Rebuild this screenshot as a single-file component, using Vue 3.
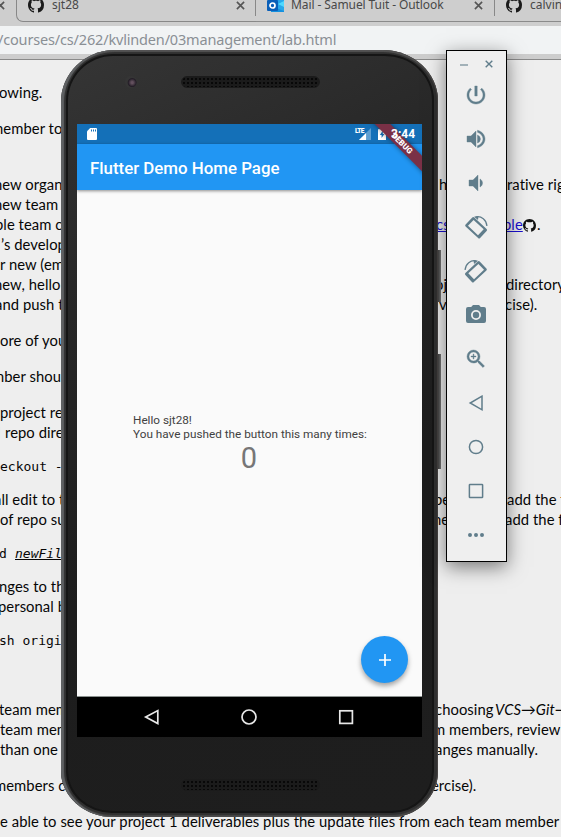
<script setup>
// Each row holds the page fragments that stay visible around the windows: [x, text, kind]
const blocks = [
  { gap: 22, rows: [[[-1, 'owing.']]] },
  { gap: 16, rows: [[[-5, 'nember to']]] },
  {
    gap: 36,
    rows: [
      [[-6, 'new organi'], [439, 'h'], [507, 'rative rights']],
      [[-6, 'new team a']],
      [[-5, 'ble team c'], [436, 'cs', 'link'], [503, 'ble', 'link'], [523, '', 'octo'], [537, '.']],
      [[1, '’s develope']],
      [[0, 'r new (emp']],
      [[-6, 'new, hello-w'], [435, 'oj'], [506, 'directory']],
      [[-5, 'and push th'], [439, 'v'], [505, 'cise).']],
    ],
  },
  { gap: 16, rows: [[[0, 'ore of your']]] },
  { gap: 16, rows: [[[-8, 'mber should']]] },
  { gap: 16, rows: [[[0, 'project rep'], ], [[-3, 'l', 'cyan'], [5, 'repo direc']]] },
  { gap: 15, rows: [[[0, 'eckout -b', 'mono']]] },
  {
    gap: 12,
    rows: [
      [[-6, 'all edit to th'], [434, 'be'], [507, 'add the fi']],
      [[0, 'of repo suc'], [433, 'ne'], [505, 'add the fi']],
    ],
  },
  { gap: 15, rows: [[[-1, 'd', 'mono'], [15, 'newFile', 'mono em']]] },
  { gap: 12, rows: [[[-1, 'nges to the'], ], [[-2, 'personal br']]] },
  { gap: 15, rows: [[[-1, 'sh origin', 'mono']]] },
  {
    gap: 48,
    rows: [
      [[-1, 'team mem'], [435, 'choosing'], [495, 'VCS→Git→', 'em']],
      [[0, 'team mem'], [433, 'm members, review']],
      [[0, 'than one m'], [435, 'anges manually.']],
    ],
  },
  { gap: 16, rows: [[[-6, 'members ca'], [431, 'ercise).']]] },
  { gap: 16, rows: [[[0, 'e able to see your project 1 deliverables plus the update files from each team member', 'full']]] },
]
const octo =
  'M8 0C3.58 0 0 3.58 0 8c0 3.54 2.29 6.53 5.47 7.59.4.07.55-.17.55-.38 0-.19-.01-.82-.01-1.49-2.01.37-2.53-.49-2.69-.94-.09-.23-.48-.94-.82-1.13-.28-.15-.68-.52-.01-.53.63-.01 1.08.58 1.23.82.72 1.21 1.87.87 2.33.66.07-.52.28-.87.51-1.07-1.78-.2-3.64-.89-3.64-3.95 0-.87.31-1.59.82-2.15-.08-.2-.36-1.02.08-2.12 0 0 .67-.21 2.2.82.64-.18 1.32-.27 2-.27s1.36.09 2 .27c1.53-1.04 2.2-.82 2.2-.82.44 1.1.16 1.92.08 2.12.51.56.82 1.27.82 2.15 0 3.07-1.87 3.75-3.65 3.95.29.25.54.73.54 1.48 0 1.07-.01 1.93-.01 2.2 0 .21.15.46.55.38A8.01 8.01 0 0 0 16 8c0-4.42-3.58-8-8-8z'
const tools = [
  { d: 'M13.200 3h-2.400v10h2.400V3zm4.630 2.170l-1.420 1.420C17.990 7.860 19 9.810 19 12c0 3.870-3.130 7-7 7s-7-3.130-7-7c0-2.190 1.010-4.140 2.580-5.420L6.170 5.170C4.230 6.820 3 9.260 3 12c0 4.970 4.030 9 9 9s9-4.030 9-9c0-2.740-1.230-5.180-3.170-6.830z', bold: true },
  { d: 'M3 9v6h4l5 5V4L7 9H3zm13.500 3A4.500 4.500 0 0 0 13.500 8v8a4.500 4.500 0 0 0 3-4zM13.500 3.230v2.060c2.890.86 5.500 3.540 5.500 6.710s-2.610 5.850-5.500 6.710v2.060c4.010-.91 7.500-4.490 7.500-8.770s-3.490-7.860-7.500-8.770z', bold: true },
  { d: 'M5 9v6h4l5 5V4L9 9H5zm13.500 3c0-1.770-1.020-3.290-2.500-4.030v8.050c1.480-.73 2.500-2.250 2.500-4.020z', bold: true },
  { rotate: true },
  { rotate: true, flip: true },
  { d: 'M9 2L7.200 4H4a2 2 0 0 0-2 2v12a2 2 0 0 0 2 2h16a2 2 0 0 0 2-2V6a2 2 0 0 0-2-2h-3.200L15 2H9zm3 5a5 5 0 1 1 0 10 5 5 0 0 1 0-10zm0 1.800a3.200 3.200 0 1 0 0 6.400 3.200 3.200 0 0 0 0-6.400z', even: true },
  { d: 'M15.500 14h-.79l-.28-.27A6.470 6.470 0 0 0 16 9.500 6.500 6.500 0 1 0 9.500 16c1.610 0 3.090-.59 4.230-1.570l.27.28v.79l5 4.990L20.490 19l-4.990-5zm-6 0C7.010 14 5 11.990 5 9.500S7.010 5 9.500 5 14 7.010 14 9.500 11.990 14 9.500 14zM12 9.100h-2.100V7h-.8v2.100H7v.8h2.100V12h.8V9.900H12z', bold: true },
  { line: 'M18 5.200L6.200 12 18 18.800z' },
  { line: 'M18.600 12a6.600 6.600 0 1 1-13.200 0 6.600 6.600 0 0 1 13.200 0z' },
  { line: 'M6 5.400h12q.6 0 .6.6v12q0 .6-.6.6H6q-.6 0-.6-.6V6q0-.6.6-.6z' },
  { d: 'M8 12a2 2 0 1 1-4 0 2 2 0 0 1 4 0zm6 0a2 2 0 1 1-4 0 2 2 0 0 1 4 0zm6 0a2 2 0 1 1-4 0 2 2 0 0 1 4 0z' },
]
</script>

<template>
  <div class="desktop">
    <header class="tabs">
      <div class="tab edge"><svg class="x" viewBox="0 0 10 10"><path d="M1 1l8 8M9 1l-8 8" /></svg></div>
      <div class="tab active">
        <svg class="gh" viewBox="0 0 16 16"><path :d="octo" /></svg>
        <span>sjt28</span>
        <svg class="x" viewBox="0 0 10 10"><path d="M1 1l8 8M9 1l-8 8" /></svg>
      </div>
      <div class="tab mail">
        <svg class="ol" viewBox="0 0 17 17">
          <path fill="#28a8ea" d="M4 1h13v13H4z" /><path fill="#e8443a" d="M12 0h3v2h-3z" />
          <path fill="#50d9ff" d="M11 7l6-3v6z" /><path fill="#1490df" d="M4 9l13 5v1H4z" />
          <rect y="3" width="11" height="11" rx="1" fill="#0a5fb8" />
          <circle cx="5.500" cy="8.500" r="2.500" fill="none" stroke="#fff" stroke-width="1.700" />
        </svg>
        <span>Mail - Samuel Tuit - Outlook</span>
        <svg class="x" viewBox="0 0 10 10"><path d="M1 1l8 8M9 1l-8 8" /></svg>
      </div>
      <div class="tab last">
        <svg class="gh" viewBox="0 0 16 16"><path :d="octo" /></svg>
        <span>calvin</span>
      </div>
    </header>
    <div class="address">/courses/cs/262/kvlinden/03management/lab.html</div>
    <div class="rule"></div>

    <main class="page">
      <section v-for="(b, i) in blocks" :key="i" :style="{ marginTop: b.gap + 'px' }">
        <p v-for="(row, j) in b.rows" :key="j">
          <span v-for="(f, k) in row" :key="k" class="frag" :class="f[2]" :style="{ marginLeft: f[0] + 'px' }">
            <svg v-if="f[2] === 'octo'" viewBox="0 0 16 16"><path :d="octo" /></svg>
            <template v-else>{{ f[1] }}</template>
          </span>
        </p>
      </section>
    </main>

    <i class="key power"></i><i class="key volume"></i>

    <div class="phone">
      <div class="body">
        <div class="top"><i class="camera"></i><i class="speaker"></i></div>
        <div class="screen">
          <div class="status">
            <svg class="sd" viewBox="0 0 10 12"><path d="M3.200 0H9q1 0 1 1v10q0 1-1 1H1q-1 0-1-1V3.200z" fill="#fff" /><path d="M4 1.500h1v2H4zM6 1.500h1v2H6zM8 1.500h1v2H8z" fill="#1470b8" /></svg>
            <span class="lte">LTE</span>
            <svg class="signal" viewBox="0 0 11 11"><path d="M11 0v11H0z" fill="#5f9fd2" /><path d="M6.500 4.500V11H0z" fill="#fff" /></svg>
            <svg class="batt" viewBox="0 0 8 12"><path d="M2.500 0h3v1.200H8V12H0V1.200h2.500z" fill="#fff" /><path d="M4.800 2.800L1.800 7h1.800v3L6.400 5.900H4.800z" fill="#1470b8" /></svg>
            <span class="time">3:44</span>
          </div>
          <div class="appbar">Flutter Demo Home Page</div>
          <div class="content">
            <div class="message">Hello sjt28!<br />You have pushed the button this many times:</div>
            <div class="count">0</div>
          </div>
          <div class="nav">
            <svg viewBox="0 0 18 18"><path d="M14.800 2.600v13L2.700 9.100z" /></svg>
            <svg viewBox="0 0 18 18"><circle cx="9" cy="9" r="7" /></svg>
            <svg viewBox="0 0 18 18"><rect x="2.800" y="2.800" width="12.600" height="12.600" /></svg>
          </div>
          <div class="banner">DEBUG</div>
          <div class="fab"><svg viewBox="0 0 12 12"><path d="M6 0v12M0 6h12" /></svg></div>
        </div>
        <div class="bottom"><i class="speaker"></i></div>
      </div>
    </div>

    <aside class="toolbar">
      <div class="controls">
        <i class="min"></i>
        <svg viewBox="0 0 8 8"><path d="M.7.7l6.600 6.600M7.300.7L.7 7.300" /></svg>
      </div>
      <svg v-for="(t, i) in tools" :key="i" class="tool" :class="{ flip: t.flip, bold: t.bold }" viewBox="0 0 24 24">
        <g v-if="t.rotate">
          <path fill-rule="evenodd" d="M8.300 2.600q1-1 2 0L22.600 14q1 1 0 2l-6.500 7q-1 1-2 0L1.600 11.500q-1-1 0-2zM9.600 5L4 10.700 14 20.200l5.700-6z" />
          <path class="arc" d="M11.500 2C17.500.6 22.500 5 22.900 11" /><path d="M14.500 1l-4.500.8 4 3.200z" />
        </g>
        <path v-else-if="t.line" class="line" :d="t.line" />
        <path v-else :d="t.d" :fill-rule="t.even ? 'evenodd' : 'nonzero'" />
      </svg>
    </aside>
  </div>
</template>

<style>
body { margin: 0; overflow: hidden; }
</style>

<style scoped>
.desktop { position: relative; width: 561px; height: 837px; overflow: hidden; background: #eee; font-family: "Noto Sans", sans-serif; }
.desktop * { box-sizing: border-box; }
.tabs { height: 26px; background: #cecece; display: flex; overflow: hidden; }
.tab { height: 22px; display: flex; align-items: center; flex: none; color: #484848; font-size: 12px; line-height: 16px; white-space: nowrap; border-bottom: 1px solid #8b8b8b; padding-bottom: 11px; }
.tab.edge { width: 16px; border: 0; }
.tab.edge .x { margin-left: -4px; }
.tab.active { width: 240px; border: 1px solid #888; border-top: 0; border-right: 0; border-radius: 0 0 0 7px; padding-left: 11px; }
.tab span { flex: 1; }
.x { width: 9px; height: 9px; flex: none; fill: none; stroke: #555; stroke-width: 1.8; }
.gh { width: 16px; height: 16px; margin-right: 8px; flex: none; fill: #1b1b1b; }
.active .x { margin-right: 11px; }
.mail { width: 239px; padding-left: 11px; letter-spacing: -.09px; }
.mail .x { margin-right: 12px; }
.ol { width: 17px; height: 17px; margin-right: 7px; flex: none; }
.mail::before, .last::before { content: ""; width: 1px; height: 16px; background: #888; margin: 0 11px 0 -12px; align-self: flex-start; flex: none; }
.last { width: 80px; padding-left: 11px; }
.address { height: 28px; background: #f1f3f4; color: #8a8f94; font-size: 14.500px; letter-spacing: -.17px; line-height: 27px; text-indent: -2px; white-space: nowrap; }
.rule { height: 6px; background: #cdcdcd; border-bottom: 1px solid #8a8a8a; }
.page { display: flow-root; color: #060606; font: 14.800px/20px Lato, sans-serif; letter-spacing: .06px; }
p { margin: 0; height: 20px; display: grid; grid-template-columns: 561px; }
.frag { grid-area: 1 / 1; white-space: nowrap; justify-self: start; }
.link { color: #1a0fd0; text-decoration: underline; }
.mono { font-family: "DejaVu Sans Mono", monospace; font-size: 13px; letter-spacing: 0; }
.em { font-style: italic; }
.mono.em { text-decoration: underline; }
.cyan { color: #7fdce8; }
.octo svg { display: block; width: 13px; height: 13px; margin-top: 5px; fill: #111; }
.key { position: absolute; left: 437px; width: 4px; background: linear-gradient(90deg, #2c2c2c, #777); }
.power { top: 250px; height: 52px; }
.volume { top: 354px; height: 115px; }
.phone { position: absolute; left: 61px; top: 50px; width: 377px; height: 767px; padding: 4px 4px 4px 5px; border-radius: 54px 55px 46px 52px / 52px 51px 46px 46px; background: #303030; box-shadow: inset 3px 0 1px #5f6163, inset -1px 0 1px #474443, inset 0 2px 1px #555, inset 0 -2px 1px #484848; }
.body { height: 100%; border: 2px solid #151515; border-radius: 47px 49px 42px 46px / 47px 46px 42px 42px; padding: 0 9px; background: linear-gradient(155deg, #353535, #282828 25%, #1d1d1d 60%, #1e1e1e); }
.top { height: 68px; display: flex; padding: 20px 0 0 48px; }
.camera { width: 12px; height: 12px; border-radius: 50%; background: radial-gradient(circle at 60% 55%, #63505e 0 1px, #231d26 4px, #353535 5px); }
.speaker { width: 139px; height: 12px; margin-left: 44px; border-radius: 6px; border: 1px solid #1b1b1b; background: radial-gradient(circle, #080808 0 .8px, #1b1b1b 1.1px) 0 0 / 4px 4px; }
.bottom { display: flex; padding: 42px 0 0 60px; }
.screen { position: relative; width: 345px; height: 613px; background: #fafafa; overflow: hidden; display: flex; flex-direction: column; font-family: Roboto, sans-serif; }
.status { height: 20px; flex: none; background: #1470b8; display: flex; align-items: center; padding: 0 7px 0 10px; color: #fff; }
.sd { width: 10px; height: 12px; margin-right: auto; }
.lte { font-size: 6.500px; font-weight: 900; letter-spacing: -.5px; line-height: 8px; align-self: flex-start; margin: 3px -6px 0 0; }
.signal { width: 12px; height: 12px; margin-left: 1px; }
.batt { width: 8px; height: 12px; margin: 0 5px 0 7px; }
.time { font-size: 12px; font-weight: 700; position: relative; z-index: 3; width: 24px; white-space: nowrap; }
.appbar { height: 46px; flex: none; background: #2196f3; color: #fff; font-size: 16.850px; font-weight: 500; line-height: 48px; padding-left: 13px; box-shadow: 0 1px 3px rgba(0, 0, 0, .45); }
.content { flex: 1; display: flex; flex-direction: column; align-items: center; padding-top: 224px; }
.message { width: 233px; font-size: 11.750px; line-height: 13.500px; color: #414141; white-space: nowrap; }
.count { font-size: 29px; line-height: 34px; color: #767676; margin-left: -1px; }
.nav { height: 41px; border-top: 1px solid #8b918f; background: #000; display: flex; justify-content: space-between; padding: 11px 67px 0 66px; }
.nav svg { width: 18px; height: 18px; fill: none; stroke: #e8e8e8; stroke-width: 1.7; }
.banner { position: absolute; left: 285px; top: 14px; width: 80px; height: 11px; transform: rotate(45deg); background: #7a3046; color: #fff; font-size: 8px; font-weight: 900; line-height: 12px; text-align: center; z-index: 2; box-shadow: 0 0 5px rgba(0, 0, 0, .45); }
.fab { position: absolute; left: 284px; top: 512px; width: 47px; height: 47px; border-radius: 50%; background: #2196f3; display: grid; place-items: center; box-shadow: 0 3px 5px rgba(0, 0, 0, .35); }
.fab svg { width: 12px; height: 12px; stroke: #fff; stroke-width: 1.7; }
.toolbar { position: absolute; left: 446px; top: 50px; width: 61px; height: 512px; border: 1px solid #000; background: #efefef; display: flex; flex-direction: column; align-items: center; box-shadow: 0 5px 18px rgba(0, 0, 0, .5); }
.controls { height: 32px; flex: none; width: 100%; display: flex; padding: 9px 13px 0 13px; justify-content: space-between; }
.min { width: 8px; height: 2px; margin-top: 4px; background: #a2b1b8; }
.controls svg { width: 8px; height: 8px; stroke: #607d8b; stroke-width: 1.4; }
.tool { width: 24px; height: 24px; margin: 0 1px 20px 0; flex: none; fill: #607d8b; overflow: visible; }
.flip { transform: scaleX(-1); }
.bold { stroke: #607d8b; stroke-width: .4; }
.line, .arc { fill: none; stroke: #607d8b; stroke-width: 1.5; }
.arc { stroke-width: 1.2; }
</style>
